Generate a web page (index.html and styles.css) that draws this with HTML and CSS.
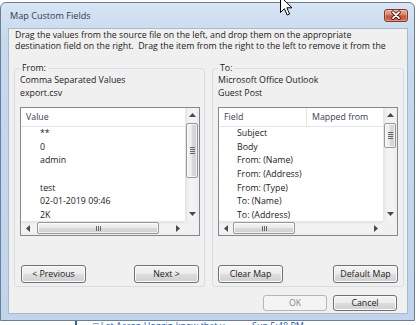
FILE: index.html
```html
<!DOCTYPE html>
<html lang="en">
<head>
    <meta charset="UTF-8">
    <meta name="viewport" content="width=device-width, initial-scale=1.0">
    <title>Map Custom Fields</title>
    <link rel="stylesheet" href="styles.css">
</head>
<body>
    <div class="screen">
        <div class="window">
            <div class="window__titlebar">
                <span class="window__title">Map Custom Fields</span>
                <div class="window__close">
                    <svg width="24" height="13" viewBox="0 0 24 13">
                        <path d="M9 3.2 L15 9.2 M15 3.2 L9 9.2" stroke="#4a1a14" stroke-width="3.6" stroke-linecap="round"/>
                        <path d="M9 3.2 L15 9.2 M15 3.2 L9 9.2" stroke="#ffffff" stroke-width="1.8" stroke-linecap="round"/>
                    </svg>
                </div>
            </div>
            <div class="window__client">
                <p class="intro">Drag the values from the source file on the left, and drop them on the appropriate<br>destination field on the right.&nbsp; Drag the item from the right to the left to remove it from the</p>

                <div class="groups">
                    <fieldset class="group">
                        <legend class="group__label">From:</legend>
                        <div class="group__info">Comma Separated Values</div>
                        <div class="group__info">export.csv</div>
                        <div class="list">
                            <div class="list__body">
                                <div class="list__view">
                                    <div class="list__header">
                                        <span class="list__col">Value</span>
                                    </div>
                                    <div class="list__rows">
                                        <div class="list__row">**</div>
                                        <div class="list__row">0</div>
                                        <div class="list__row">admin</div>
                                        <div class="list__row"></div>
                                        <div class="list__row">test</div>
                                        <div class="list__row">02-01-2019 09:46</div>
                                        <div class="list__row">2K</div>
                                    </div>
                                </div>
                                <div class="vscroll">
                                    <div class="scroll__arrow"><svg width="7" height="4" viewBox="0 0 7 4"><path d="M0 4 L3.5 0 L7 4 Z" fill="#4a4a4a"/></svg></div>
                                    <div class="vscroll__track">
                                        <div class="vscroll__thumb vscroll__thumb--long"><span></span><span></span><span></span><span></span></div>
                                    </div>
                                    <div class="scroll__arrow"><svg width="7" height="4" viewBox="0 0 7 4"><path d="M0 0 L3.5 4 L7 0 Z" fill="#4a4a4a"/></svg></div>
                                </div>
                            </div>
                            <div class="hscroll">
                                <div class="scroll__arrow"><svg width="4" height="7" viewBox="0 0 4 7"><path d="M4 0 L0 3.5 L4 7 Z" fill="#4a4a4a"/></svg></div>
                                <div class="hscroll__track">
                                    <div class="hscroll__thumb hscroll__thumb--long"><span></span><span></span><span></span></div>
                                </div>
                                <div class="scroll__arrow"><svg width="4" height="7" viewBox="0 0 4 7"><path d="M0 0 L4 3.5 L0 7 Z" fill="#4a4a4a"/></svg></div>
                                <div class="scroll__corner"></div>
                            </div>
                        </div>
                        <div class="group__buttons">
                            <button class="btn">&lt; Previous</button>
                            <button class="btn">Next &gt;</button>
                        </div>
                    </fieldset>

                    <fieldset class="group">
                        <legend class="group__label">To:</legend>
                        <div class="group__info">Microsoft Office Outlook</div>
                        <div class="group__info">Guest Post</div>
                        <div class="list">
                            <div class="list__body">
                                <div class="list__view">
                                    <div class="list__header">
                                        <span class="list__col list__col--field">Field</span>
                                        <span class="list__col">Mapped from</span>
                                    </div>
                                    <div class="list__rows list__rows--fields">
                                        <div class="list__row">Subject</div>
                                        <div class="list__row">Body</div>
                                        <div class="list__row">From: (Name)</div>
                                        <div class="list__row">From: (Address)</div>
                                        <div class="list__row">From: (Type)</div>
                                        <div class="list__row">To: (Name)</div>
                                        <div class="list__row">To: (Address)</div>
                                    </div>
                                </div>
                                <div class="vscroll">
                                    <div class="scroll__arrow"><svg width="7" height="4" viewBox="0 0 7 4"><path d="M0 4 L3.5 0 L7 4 Z" fill="#4a4a4a"/></svg></div>
                                    <div class="vscroll__track">
                                        <div class="vscroll__thumb vscroll__thumb--short"><span></span><span></span><span></span><span></span></div>
                                    </div>
                                    <div class="scroll__arrow"><svg width="7" height="4" viewBox="0 0 7 4"><path d="M0 0 L3.5 4 L7 0 Z" fill="#4a4a4a"/></svg></div>
                                </div>
                            </div>
                            <div class="hscroll">
                                <div class="scroll__arrow"><svg width="4" height="7" viewBox="0 0 4 7"><path d="M4 0 L0 3.5 L4 7 Z" fill="#4a4a4a"/></svg></div>
                                <div class="hscroll__track">
                                    <div class="hscroll__thumb hscroll__thumb--short"><span></span><span></span><span></span></div>
                                </div>
                                <div class="scroll__arrow"><svg width="4" height="7" viewBox="0 0 4 7"><path d="M0 0 L4 3.5 L0 7 Z" fill="#4a4a4a"/></svg></div>
                                <div class="scroll__corner"></div>
                            </div>
                        </div>
                        <div class="group__buttons group__buttons--right">
                            <button class="btn">Clear Map</button>
                            <button class="btn">Default Map</button>
                        </div>
                    </fieldset>
                </div>

                <div class="dialog__buttons">
                    <button class="btn btn--dialog" disabled>OK</button>
                    <button class="btn btn--dialog">Cancel</button>
                </div>
            </div>
        </div>

        <div class="taskstrip">
            <span class="taskstrip__bar"></span>
            <span class="taskstrip__subject">&#9633; Let Aaron Hoggin know that y</span>
            <span class="taskstrip__date">Sun 5:48 PM</span>
        </div>

        <svg class="cursor" width="14" height="21" viewBox="0 0 14 21">
            <path d="M0.5 0.5 V16.5 L4.4 12.7 L7.2 19 L9.6 18 L6.9 11.8 H12 Z" fill="#ffffff" stroke="#000000" stroke-width="1" stroke-linejoin="round"/>
        </svg>
    </div>
</body>
</html>
```

FILE: styles.css
```css
* {
    box-sizing: border-box;
    margin: 0;
    padding: 0;
}

body {
    font-family: 'Open Sans', sans-serif;
    font-size: 8.8px;
    color: #1b1b1b;
    background: white;
}

.screen {
    position: relative;
    width: 416px;
    height: 325px;
    overflow: hidden;
    background: #ffffff;
}

/* WINDOW FRAME
=============== */
.window {
    margin-top: 2px;
    width: 415px;
    height: 319px;
    border: 1px solid #6d7d93;
    border-radius: 6px 6px 0 0;
    background: linear-gradient(#d7e5f4 0%, #c6d9ee 12%, #c0d4eb 100%);
    display: flex;
    flex-direction: column;
}

.window__titlebar {
    height: 25px;
    display: flex;
    align-items: flex-start;
    padding-left: 9px;
}

.window__title {
    margin-top: 7px;
    font-size: 9.1px;
    line-height: 12px;
    color: #303b55;
}

.window__close {
    margin-left: auto;
    margin-top: 6px;
    margin-right: 6px;
    width: 24px;
    height: 13px;
    border: 1px solid #80392b;
    border-radius: 3px;
    background: linear-gradient(#eaab9b 0%, #d98672 45%, #c5503a 52%, #d2714f 100%);
    box-shadow: inset 0 0 0 1px rgba(255, 255, 255, 0.3);
}

.window__close svg {
    display: block;
    margin: -1px 0 0 -1px;
}

.window__client {
    margin: 0 6px 6px 7px;
    height: 286px;
    border: 1px solid #a9b9cd;
    background: #f0f0f0;
    display: flex;
    flex-direction: column;
}

/* INTRO */
.intro {
    height: 23px;
    padding: 1px 0 0 6px;
    line-height: 11px;
    overflow: hidden;
    white-space: nowrap;
}

/* GROUPS */
.groups {
    margin-top: 10px;
    display: grid;
    grid-template-columns: 191px 192px;
    column-gap: 7px;
    padding-left: 5px;
}

.group {
    min-width: 0;
    border: 1px solid #d5dfe5;
    border-radius: 3px;
    padding: 0 4px 3px 5px;
}

.group__label {
    padding: 0 2px;
    line-height: 12px;
}

.group__info {
    line-height: 13px;
    white-space: nowrap;
}

.group__buttons {
    margin: 29px 1px 0 1px;
    display: flex;
    justify-content: space-between;
}

.group__buttons--right {
    margin-left: 0;
}

/* LIST VIEW */
.list {
    margin-top: 7px;
    width: 180px;
    height: 129px;
    border: 1px solid #848991;
    background: #ffffff;
    display: flex;
    flex-direction: column;
}

.list__body {
    height: 113px;
    display: flex;
}

.list__view {
    flex: 1;
    overflow: hidden;
}

.list__header {
    height: 19px;
    display: flex;
    border-bottom: 1px solid #e3e6ea;
    line-height: 18px;
    color: #3a3c52;
}

.list__col {
    padding-left: 5px;
    white-space: nowrap;
}

.list__col--field {
    width: 88px;
    flex: none;
    border-right: 1px solid #e5e5e5;
}

.list__rows {
    padding-left: 19px;
}

.list__rows--fields {
    padding-left: 18px;
}

.list__row {
    height: 13.67px;
    line-height: 13.67px;
    white-space: nowrap;
}

/* SCROLLBARS */
.vscroll {
    width: 14px;
    display: flex;
    flex-direction: column;
    background: linear-gradient(to right, #e4e4e4, #f3f3f3 30%, #f3f3f3 70%, #ececec);
}

.scroll__arrow {
    width: 14px;
    height: 14px;
    flex: none;
    display: flex;
    align-items: center;
    justify-content: center;
}

.vscroll__track {
    flex: 1;
    padding: 1px 1px 0 1px;
}

.vscroll__thumb {
    width: 12px;
    border: 1px solid #989898;
    border-radius: 2px;
    background: linear-gradient(to right, #f6f6f6, #eaeaea 45%, #d9d9d9 55%, #d0d0d0);
    box-shadow: inset 0 0 0 1px rgba(255, 255, 255, 0.7);
    display: flex;
    flex-direction: column;
    align-items: center;
    justify-content: center;
    gap: 1px;
}

.vscroll__thumb span {
    width: 5px;
    height: 1px;
    background: #666666;
}

.vscroll__thumb--long {
    height: 55px;
}

.vscroll__thumb--short {
    height: 25px;
}

.hscroll {
    height: 14px;
    display: flex;
    background: linear-gradient(#e4e4e4, #f3f3f3 30%, #f3f3f3 70%, #ececec);
}

.hscroll__track {
    flex: 1;
    padding-top: 1px;
}

.hscroll__thumb {
    height: 12px;
    border: 1px solid #989898;
    border-radius: 2px;
    background: linear-gradient(#f6f6f6, #eaeaea 45%, #d9d9d9 55%, #d0d0d0);
    box-shadow: inset 0 0 0 1px rgba(255, 255, 255, 0.7);
    display: flex;
    align-items: center;
    justify-content: center;
    gap: 1px;
}

.hscroll__thumb span {
    width: 1px;
    height: 5px;
    background: #666666;
}

.hscroll__thumb--long {
    margin-left: 2px;
    width: 122px;
}

.hscroll__thumb--short {
    width: 62px;
}

.scroll__corner {
    width: 14px;
    flex: none;
    background: #f0f0f0;
}

/* BUTTONS */
.btn {
    width: 65px;
    height: 18px;
    font-family: inherit;
    font-size: 8.8px;
    color: #1b1b1b;
    border: 1px solid #707070;
    border-radius: 3px;
    background: linear-gradient(#f3f3f3 0%, #ececec 48%, #dddddd 52%, #cfcfcf 100%);
    box-shadow: inset 0 0 0 1px #fbfbfb;
}

.btn--dialog {
    width: 64px;
    height: 16px;
}

.btn:disabled {
    color: #8a8a8a;
    border-color: #b3b7ba;
    background: #f4f4f4;
    box-shadow: none;
}

.dialog__buttons {
    margin-top: 8px;
    padding-right: 10px;
    display: flex;
    justify-content: flex-end;
    gap: 6px;
}

/* BACKGROUND STRIP */
.taskstrip {
    height: 4px;
    overflow: hidden;
    display: flex;
    font-size: 9px;
    line-height: 9px;
    color: #1f57b3;
}

.taskstrip__bar {
    margin-left: 75px;
    width: 2px;
    height: 4px;
    background: #2a63bd;
}

.taskstrip__subject {
    margin-left: 16px;
    width: 159px;
    white-space: nowrap;
}

.taskstrip__date {
    white-space: nowrap;
}

/* MOUSE POINTER */
.cursor {
    position: absolute;
    left: 280px;
    top: -4px;
}
```
